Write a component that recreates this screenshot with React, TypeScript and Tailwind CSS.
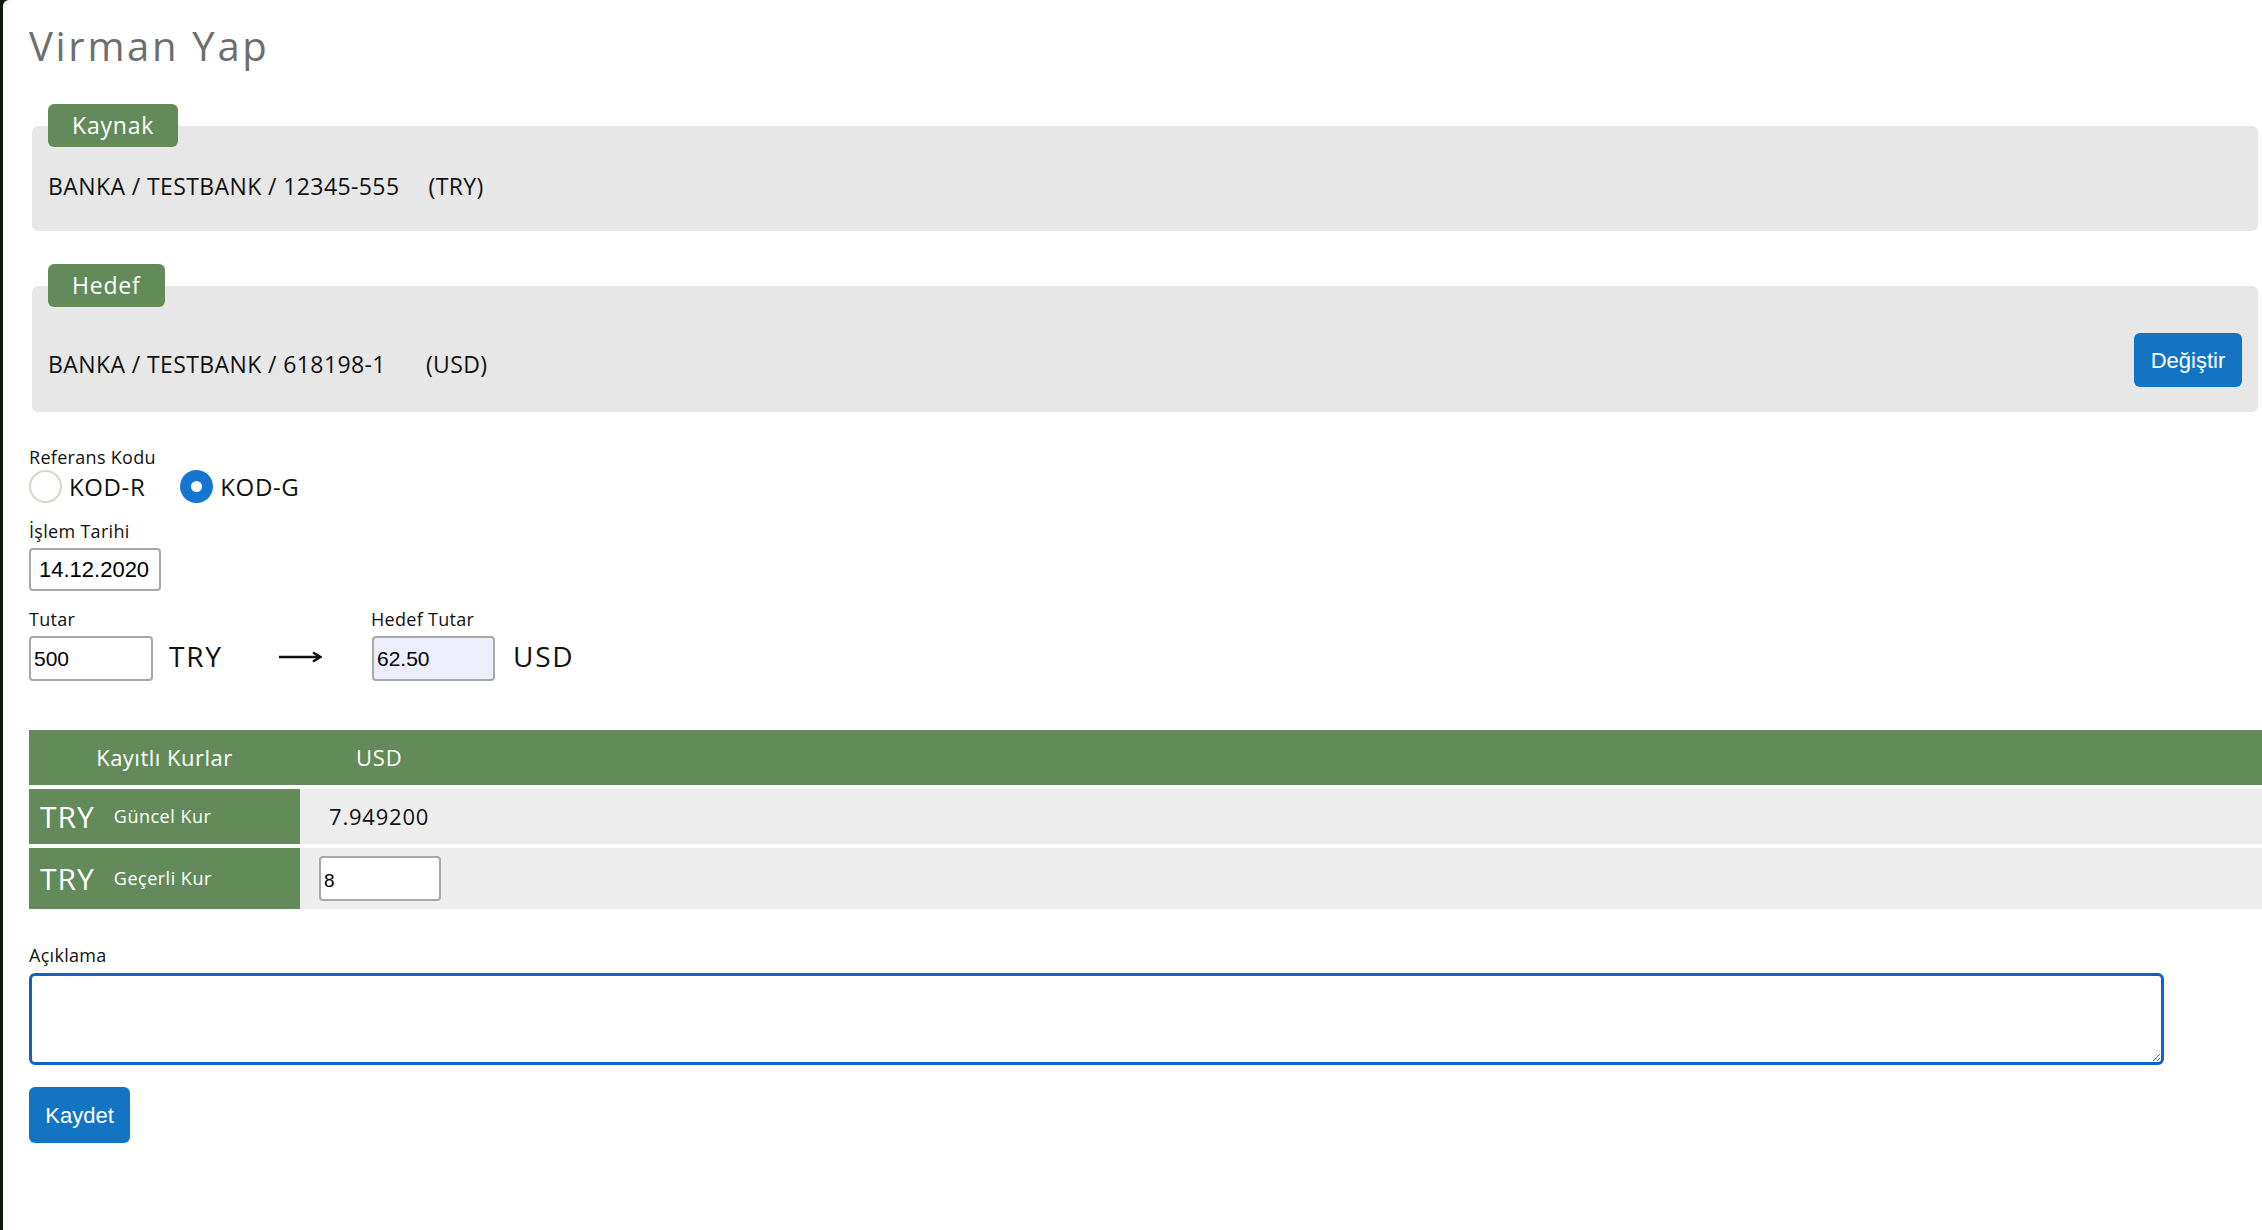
import { useState } from 'react'

const sans = "font-['Open_Sans',sans-serif]"
const arial = "font-['Liberation_Sans',Arial,sans-serif]"

function Badge({ label }: { label: string }) {
  return (
    <div
      className={`absolute -top-[22px] left-[16px] h-[43px] rounded-[6px] bg-[#638b5a] px-[24px] text-[23px] leading-[43px] tracking-[0.8px] text-white ${sans}`}
    >
      {label}
    </div>
  )
}

function RateRow({
  caption,
  tall,
  children,
}: {
  caption: string
  tall?: boolean
  children: React.ReactNode
}) {
  return (
    <div className={`mt-[4px] flex ${tall ? 'h-[61px]' : 'h-[55px]'}`}>
      <div className="flex w-[271px] items-center bg-[#638b5a] pl-[11px] text-white">
        <span className={`text-[30px] tracking-[1px] ${sans}`}>TRY</span>
        <span className={`ml-[19px] text-[18px] tracking-[0.5px] ${sans}`}>{caption}</span>
      </div>
      <div className="flex flex-1 items-center bg-[#ededed]">{children}</div>
    </div>
  )
}

function Radio({ checked, label, onPick }: { checked: boolean; label: string; onPick: () => void }) {
  return (
    <button onClick={onPick} className="flex items-center">
      <span
        className={`flex h-[33px] w-[33px] items-center justify-center rounded-full ${
          checked ? 'bg-[#1476d0]' : 'border-2 border-[#dcd6c8] bg-white'
        }`}
      >
        {checked && <span className="h-[11px] w-[11px] rounded-full bg-white" />}
      </span>
      <span className="ml-[7px]">{label}</span>
    </button>
  )
}

export default function App() {
  const [code, setCode] = useState('G')
  const labelCls = `block text-[18px] leading-[20px] tracking-[0.3px] text-[#111] ${sans}`

  return (
    <div className="flex min-h-screen bg-[#0f1a0c]">
      <div className="w-[3px] shrink-0" />
      <main className="flex-1 rounded-tl-[6px] bg-white pb-[80px] pl-[26px]">
        <h1
          className={`mt-[22px] text-[40px] leading-[48px] tracking-[2.7px] text-[#6e6e6e] ${sans}`}
        >
          Virman Yap
        </h1>

        {/* source account */}
        <section className="relative ml-[3px] mr-[4px] mt-[56px] h-[105px] rounded-[6px] bg-[#e7e7e7] pl-[16px] pt-[48px]">
          <Badge label="Kaynak" />
          <p className={`text-[23px] leading-[24px] tracking-[0.4px] text-[#111] ${sans}`}>
            BANKA / TESTBANK / 12345-555
            <span className="ml-[29px]">(TRY)</span>
          </p>
        </section>

        {/* target account */}
        <section className="relative ml-[3px] mr-[4px] mt-[55px] h-[126px] rounded-[6px] bg-[#e7e7e7] pl-[16px] pr-[16px] pt-[47px]">
          <Badge label="Hedef" />
          <div className="flex h-[54px] items-center justify-between">
            <p
              className={`mt-[8px] text-[23px] leading-[24px] tracking-[0.4px] text-[#111] ${sans}`}
            >
              BANKA / TESTBANK / 618198-1
              <span className="ml-[40px]">(USD)</span>
            </p>
            <button
              className={`h-[54px] w-[108px] rounded-[6px] bg-[#1374c4] text-[22px] text-white ${arial}`}
            >
              Değiştir
            </button>
          </div>
        </section>

        <label className={`mt-[35px] ${labelCls}`}>Referans Kodu</label>
        <div className={`mt-[3px] flex h-[33px] items-center gap-[35px] text-[24px] tracking-[0.6px] text-[#111] ${sans}`}>
          <Radio checked={code === 'R'} label="KOD-R" onPick={() => setCode('R')} />
          <Radio checked={code === 'G'} label="KOD-G" onPick={() => setCode('G')} />
        </div>

        <label className={`mt-[18px] ${labelCls}`}>İşlem Tarihi</label>
        <input
          defaultValue="14.12.2020"
          className={`mt-[7px] block h-[43px] w-[132px] rounded-[4px] border-2 border-[#a8a8a8] px-[8px] text-[22px] text-black ${arial}`}
        />

        <div className="mt-[18px] flex">
          <div className="w-[342px]">
            <label className={labelCls}>Tutar</label>
            <div className="mt-[7px] flex h-[45px] items-center">
              <input
                defaultValue="500"
                className={`h-[45px] w-[124px] rounded-[4px] border-2 border-[#a8a8a8] px-[3px] pt-[1px] text-[21px] text-black ${arial}`}
              />
              <span className={`-mt-[6px] ml-[16px] text-[28px] tracking-[1.8px] text-[#111] ${sans}`}>TRY</span>
              <svg className="-mt-[4px] ml-[56px]" width="43" height="16" viewBox="0 0 43 16">
                <path d="M0 8H41M34 3.5L41.5 8L34 12.5" fill="none" stroke="#111" strokeWidth="2.4" />
              </svg>
            </div>
          </div>
          <div>
            <label className={labelCls}>Hedef Tutar</label>
            <div className="mt-[7px] flex h-[45px] items-center">
              <input
                defaultValue="62.50"
                className={`ml-[1px] h-[45px] w-[123px] rounded-[4px] border-2 border-[#a8a8a8] bg-[#eceefb] px-[3px] pt-[1px] text-[21px] text-black ${arial}`}
              />
              <span className={`-mt-[6px] ml-[18px] text-[28px] tracking-[1.8px] text-[#111] ${sans}`}>USD</span>
            </div>
          </div>
        </div>

        {/* saved rates */}
        <div className="mt-[49px]">
          <div className={`flex h-[55px] items-center bg-[#638b5a] text-[22px] text-white ${sans}`}>
            <div className="w-[271px] text-center tracking-[0.5px]">Kayıtlı Kurlar</div>
            <div className="ml-[56px] tracking-[0.8px]">USD</div>
          </div>
          <RateRow caption="Güncel Kur">
            <span className={`ml-[29px] text-[22px] tracking-[0.8px] text-[#111] ${sans}`}>7.949200</span>
          </RateRow>
          <RateRow caption="Geçerli Kur" tall>
            <input
              defaultValue="8"
              className={`ml-[19px] h-[45px] w-[122px] rounded-[4px] border-2 border-[#a8a8a8] bg-white px-[3px] pt-[4px] text-[19px] text-black ${arial}`}
            />
          </RateRow>
        </div>

        <label className={`mt-[36px] ${labelCls}`}>Açıklama</label>
        <textarea
          autoFocus
          className={`mt-[8px] block h-[92px] w-[2135px] rounded-[6px] border-[3px] border-[#0f62c9] px-[3px] py-[4px] text-[20px] outline-none ${arial}`}
        />

        <button
          className={`mt-[22px] block h-[56px] w-[101px] rounded-[6px] bg-[#1374c4] text-[22px] text-white ${arial}`}
        >
          Kaydet
        </button>
      </main>
    </div>
  )
}
